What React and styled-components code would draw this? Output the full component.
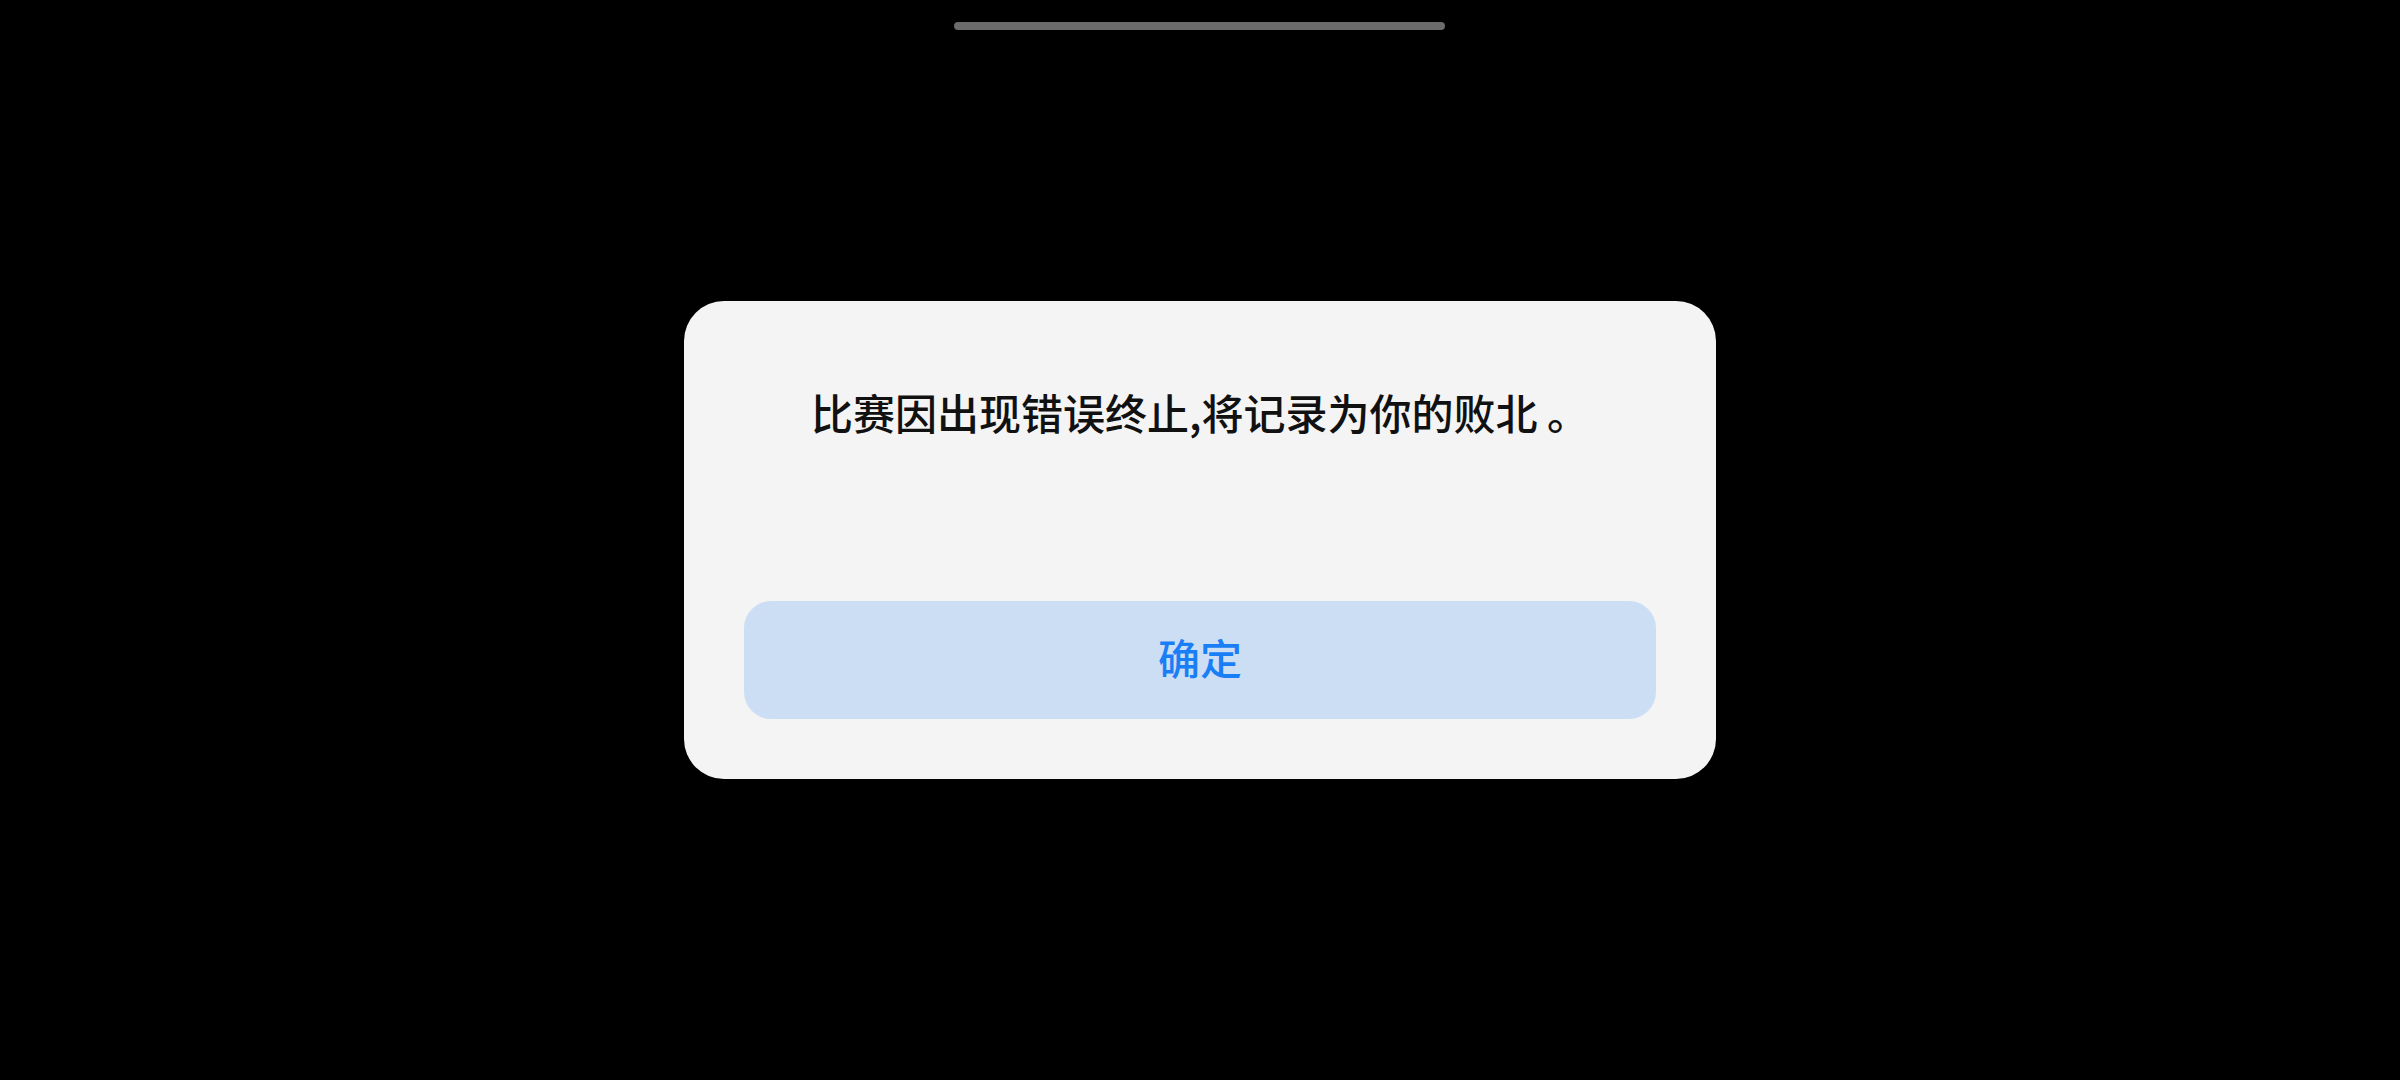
import React from "react";
import styled, { createGlobalStyle } from "styled-components";

const GlobalStyle = createGlobalStyle`
  html, body {
    margin: 0;
    padding: 0;
    background: #000;
  }
  * { box-sizing: border-box; }
`;

const Screen = styled.div`
  position: relative;
  width: 2400px;
  height: 1080px;
  background: #000;
  display: flex;
  align-items: center;
  justify-content: center;
  font-family: "Noto Sans CJK SC", "Noto Sans", sans-serif;
`;

const GestureBar = styled.div`
  position: absolute;
  top: 22px;
  left: 954px;
  width: 491px;
  height: 8px;
  border-radius: 4px;
  background: #6b6b6b;
`;

const Dialog = styled.div`
  width: 1032px;
  height: 478px;
  background: #f4f4f4;
  border-radius: 40px;
  padding: 80px 60px 60px;
  display: flex;
  flex-direction: column;
  align-items: stretch;
`;

const Message = styled.p`
  margin: 0 0 158px;
  font-size: 42px;
  line-height: 62px;
  font-weight: 500;
  color: #111;
  text-align: center;
  white-space: nowrap;
`;

const ConfirmButton = styled.button`
  height: 119px;
  padding: 0 0 8px;
  border: none;
  border-radius: 27px;
  background: #cbdef4;
  color: #1a7ef6;
  font-family: inherit;
  font-size: 42px;
  font-weight: 500;
  display: flex;
  align-items: center;
  justify-content: center;
  cursor: pointer;
`;

export default function App() {
  return (
    <>
      <GlobalStyle />
      <Screen>
        <GestureBar />
        <Dialog>
          <Message>比赛因出现错误终止,将记录为你的败北 。</Message>
          <ConfirmButton>确定</ConfirmButton>
        </Dialog>
      </Screen>
    </>
  );
}
